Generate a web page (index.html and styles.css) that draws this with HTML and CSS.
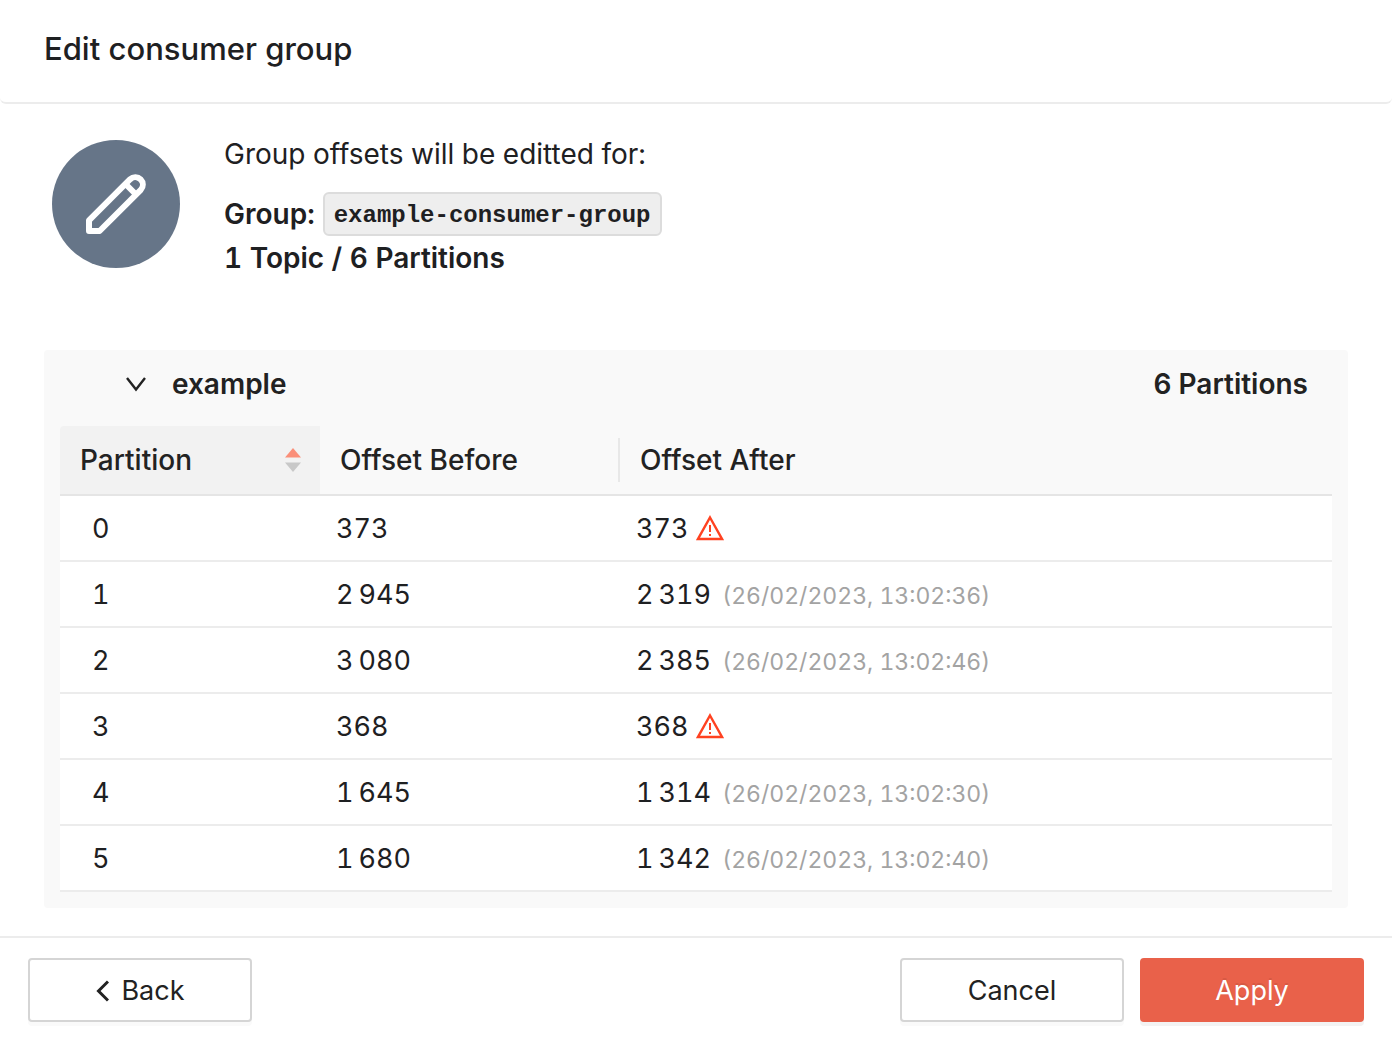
FILE: index.html
```html
<!DOCTYPE html>
<html lang="en">
<head>
<meta charset="utf-8">
<meta name="viewport" content="width=device-width, initial-scale=1">
<title>Edit consumer group</title>
<link rel="stylesheet" href="styles.css">
</head>
<body>
<div class="dialog" role="dialog" aria-labelledby="dialog-title">
  <header class="dialog-header">
    <h1 class="dialog-title" id="dialog-title">Edit consumer group</h1>
  </header>
  <main class="dialog-body">
    <section class="summary">
      <div class="summary-icon">
        <svg width="128" height="128" viewBox="0 0 128 128" fill="none" stroke="#fff" stroke-width="6" aria-hidden="true">
          <path stroke-linejoin="round" d="M37 91V80.400L78.200 39.200A7.500 7.500 0 0 1 88.800 49.800L47.600 91Z"/>
          <path d="M73 43.500L84 54.500"/>
        </svg>
      </div>
      <div class="summary-text">
        <p class="summary-lead">Group offsets will be editted for:</p>
        <p class="summary-line">Group: <code class="code">example-consumer-group</code></p>
        <p class="summary-line">1 Topic / 6 Partitions</p>
      </div>
    </section>
    <section class="panel">
      <button class="panel-header" type="button" aria-expanded="true">
        <svg class="panel-arrow" width="24" height="24" viewBox="0 0 24 24" fill="none" stroke="#222" stroke-width="2.400" aria-hidden="true"><path d="M3 6L12 17.500L21 6"/></svg>
        <span>example</span>
        <span class="panel-extra">6 Partitions</span>
      </button>
      <table class="table">
        <colgroup><col class="col-partition"><col class="col-before"><col></colgroup>
        <thead>
          <tr>
            <th scope="col" class="sorted" aria-sort="ascending">
              <div class="sorter">Partition
                <svg width="16" height="26" viewBox="0 0 16 26" aria-hidden="true"><path fill="#fa8f79" d="M8 1L16 10.500H0Z"/><path fill="#c8c8c8" d="M8 25L0 15.500H16Z"/></svg>
              </div>
            </th>
            <th scope="col"><div class="divided">Offset Before</div></th>
            <th scope="col">Offset After</th>
          </tr>
        </thead>
        <tbody>
          <tr><td>0</td><td>373</td><td>373 <svg class="warning" width="28" height="28" viewBox="0 0 28 28" role="img" aria-label="Warning"><path fill="none" stroke="#ff4221" stroke-width="2.400" d="M14 3.500L26 25H2Z"/><path fill="#ff4221" d="M13 11h2v7h-2zM13 20h2v2h-2z"/></svg></td></tr>
          <tr><td>1</td><td>2&#8201;945</td><td>2&#8201;319 <span class="date">(26/02/2023, 13:02:36)</span></td></tr>
          <tr><td>2</td><td>3&#8201;080</td><td>2&#8201;385 <span class="date">(26/02/2023, 13:02:46)</span></td></tr>
          <tr><td>3</td><td>368</td><td>368 <svg class="warning" width="28" height="28" viewBox="0 0 28 28" role="img" aria-label="Warning"><path fill="none" stroke="#ff4221" stroke-width="2.400" d="M14 3.500L26 25H2Z"/><path fill="#ff4221" d="M13 11h2v7h-2zM13 20h2v2h-2z"/></svg></td></tr>
          <tr><td>4</td><td>1&#8201;645</td><td>1&#8201;314 <span class="date">(26/02/2023, 13:02:30)</span></td></tr>
          <tr><td>5</td><td>1&#8201;680</td><td>1&#8201;342 <span class="date">(26/02/2023, 13:02:40)</span></td></tr>
        </tbody>
      </table>
    </section>
  </main>
  <footer class="dialog-footer">
    <button class="button button-back" type="button"><svg width="14" height="22" viewBox="0 0 14 22" fill="none" stroke="#222" stroke-width="3" aria-hidden="true"><path d="M13 1.500L3.500 11L13 20.500"/></svg>Back</button>
    <button class="button" type="button">Cancel</button>
    <button class="button button-primary" type="button">Apply</button>
  </footer>
</div>
</body>
</html>
```
FILE: styles.css
```css
* { box-sizing: border-box; }

body {
  margin: 0;
  background: #fff;
  color: #1e2022;
  font-family: Inter, "Liberation Sans", sans-serif;
  font-size: 27px;
  line-height: 44px;
  font-variant-numeric: tabular-nums;
}

h1, p { margin: 0; }

.dialog-header {
  padding: 27px 44px 31px;
  border-bottom: 2px solid #ececec;
  border-radius: 0 0 6px 6px;
}

.dialog-title {
  font-size: 31px;
  font-weight: 500;
  line-height: 44px;
}

.dialog-body { padding: 28px 44px; }

.summary {
  display: flex;
  gap: 44px;
  padding-left: 8px;
  margin-bottom: 70px;
}

.summary-icon {
  flex: none;
  width: 128px;
  height: 128px;
  margin-top: 8px;
  border-radius: 50%;
  background: #667588;
}

.summary-lead {
  margin-bottom: 16px;
  font-size: 28px;
}

.summary-line {
  display: flex;
  align-items: center;
  gap: 8px;
  font-size: 28px;
  font-weight: 600;
}

.code {
  padding: 3px 9px 0;
  border: 2px solid #dcdcdc;
  border-radius: 6px;
  background: #eee;
  font: bold 24px/37px "Courier New", "Liberation Mono", monospace;
}

.panel {
  padding: 0 16px 16px;
  border-radius: 4px;
  background: #f9f9f9;
}

.panel-header {
  display: flex;
  align-items: center;
  gap: 24px;
  width: 100%;
  padding: 12px 24px 20px 64px;
  border: 0;
  background: none;
  color: #222;
  font: inherit;
  font-size: 28px;
  font-weight: 600;
  text-align: left;
}

.panel-extra {
  margin-left: auto;
  font-variant-numeric: normal;
}

.table {
  width: 100%;
  border-collapse: separate;
  border-spacing: 0;
  table-layout: fixed;
}

.col-partition { width: 260px; }
.col-before { width: 300px; }

.table th {
  padding: 12px 0 12px 20px;
  border-bottom: 2px solid #e5e5e5;
  color: #222;
  font-size: 28px;
  font-weight: 500;
  text-align: left;
}

.table .sorted {
  padding-right: 19px;
  border-top-left-radius: 4px;
  background: #f2f2f2;
}

.sorter {
  display: flex;
  align-items: center;
  justify-content: space-between;
}

.divided { border-right: 2px solid #e8e8e8; }

.table td {
  padding: 11px 16px 9px;
  border-bottom: 2px solid #ececec;
  background: #fff;
}

.table td:first-child { padding-left: 32px; }

.warning { vertical-align: -4px; }

.date {
  margin-left: 4px;
  color: #a3a3a3;
  font-size: 23px;
  line-height: 1;
}

.dialog-footer {
  display: flex;
  gap: 16px;
  padding: 20px 28px 18px;
  border-top: 2px solid #ececec;
}

.button {
  display: flex;
  align-items: center;
  justify-content: center;
  width: 224px;
  height: 64px;
  padding-top: 2px;
  border: 2px solid #d5d5d5;
  border-radius: 4px;
  background: #fff;
  box-shadow: 0 4px 0 #fafafa;
  color: #222;
  font: inherit;
}

.button-back {
  gap: 12px;
  margin-right: auto;
}

.button-primary {
  border-color: #e9614a;
  background: #e9614a;
  box-shadow: 0 4px 0 #f3f3f3;
  color: #fff;
  text-shadow: 0 -2px 0 #d75944;
}
```
